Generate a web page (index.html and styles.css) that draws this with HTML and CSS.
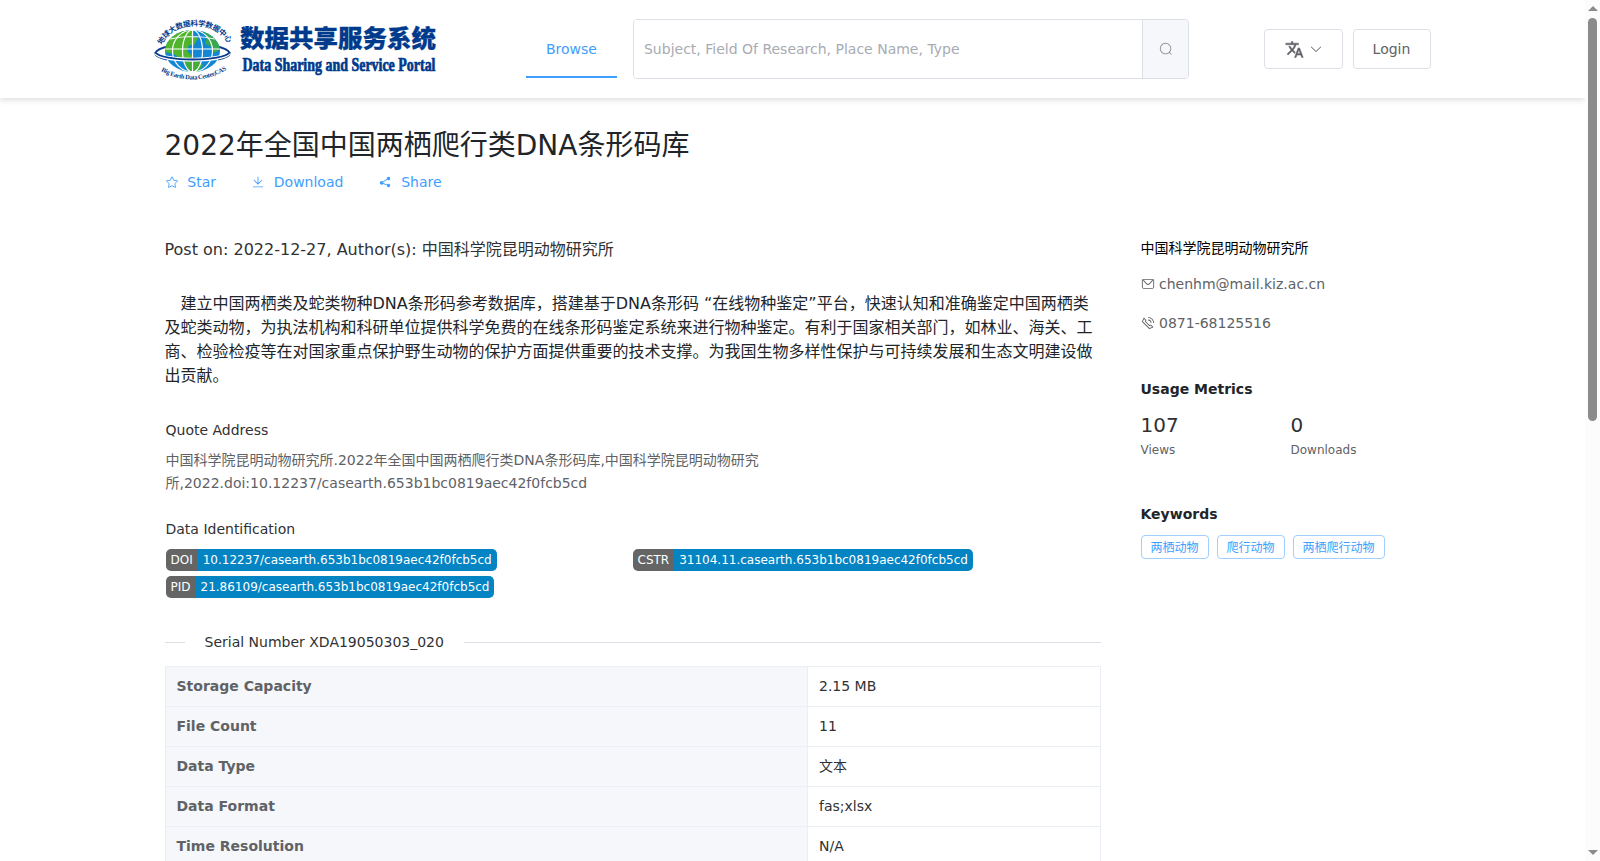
FILE: index.html
```html
<!DOCTYPE html>
<html lang="zh-CN">
<head>
  <meta charset="UTF-8" />
  <meta name="viewport" content="width=device-width, initial-scale=1.0"/>
  <title>2022年全国中国两栖爬行类DNA条形码库</title>
  <link rel="stylesheet" href="styles.css">
</head>
<body>
  <div class="page">
    <header class="header">
      <a class="logo" href="#">
        <svg width="300" height="90" viewBox="-5 -10 300 90">
          <defs>
            <path id="arcTop" d="M8 31 A35 28 0 0 1 74 30"/>
            <path id="arcBottom" d="M7 57 Q40 75 74 55"/>
            <clipPath id="globe"><ellipse cx="38.500" cy="37" rx="27.500" ry="21"/></clipPath>
          </defs>
          <path d="M15 32C-1 36 -4 42 13 45.500M62 32C78 36 81 42 64 45.500" fill="none" stroke="#0b3b8c" stroke-width="2"/>
          <ellipse cx="38.500" cy="37" rx="27.500" ry="21" fill="#1288d4"/>
          <g clip-path="url(#globe)">
            <path d="M10 30 21 18 30 15 40 16 38 22 44 24 40 31 35 31 33 37 40 44 37 48 26 45 20 40 11 38z" fill="#50b52c"/>
            <path d="M48 15 58 18 65 27 67 35 60 39 56 32 51 30 53 23z" fill="#38a94f"/>
            <path d="M30 47 43 46 49 51 43 59 35 58z" fill="#43ad38"/>
            <g fill="none" stroke="#fff" stroke-width="1.200">
              <path d="M38.500 16v42M10 35h57M16 25q22-5 45 0"/>
              <ellipse cx="38.500" cy="37" rx="10" ry="21"/>
              <ellipse cx="38.500" cy="37" rx="20" ry="21"/>
            </g>
          </g>
          <path d="M2 39C8 48 69 48 75 39" fill="none" stroke="#fff" stroke-width="4"/>
          <path d="M1 38C7 48 70 48 76 38" fill="none" stroke="#0b3b8c" stroke-width="1.800"/>
          <text class="logo-arc"><textPath href="#arcTop" textLength="79">地球大数据科学数据中心</textPath></text>
          <text class="logo-arc-en"><textPath href="#arcBottom" textLength="69">Big Earth Data Center,CAS</textPath></text>
          <text class="logo-cn" x="86" y="33" textLength="196" lengthAdjust="spacingAndGlyphs">数据共享服务系统</text>
          <text class="logo-en" x="88.500" y="56.500" textLength="193" lengthAdjust="spacingAndGlyphs">Data Sharing and Service Portal</text>
        </svg>
      </a>
      <nav class="nav"><a class="nav-item" href="#">Browse</a></nav>
      <form class="search">
        <input class="search-input" type="text" placeholder="Subject, Field Of Research, Place Name, Type">
        <button class="search-btn" type="button">
          <svg class="icon" viewBox="0 0 1024 1024"><path d="m795.904 750.720 124.992 124.928a32 32 0 0 1-45.248 45.248L750.656 795.904a416 416 0 1 1 45.248-45.248zM480 832a352 352 0 1 0 0-704 352 352 0 0 0 0 704"/></svg>
        </button>
      </form>
      <div class="header-actions">
        <button class="btn btn-lang" type="button">
          <svg class="icon-lang" viewBox="0 0 24 24"><path d="M12.870 15.070l-2.540-2.510.03-.03c1.740-1.940 2.980-4.170 3.710-6.530H17V4h-7V2H8v2H1v1.990h11.170C11.500 7.920 10.440 9.750 9 11.350 8.070 10.320 7.300 9.190 6.690 8h-2c.73 1.630 1.730 3.170 2.980 4.560l-5.090 5.020L4 19l5-5 3.110 3.110.76-2.040zM18.500 10h-2L12 22h2l1.120-3h4.750L21 22h2l-4.500-12zm-2.620 7l1.620-4.330L19.120 17h-3.240z"/></svg>
          <svg class="icon" viewBox="0 0 1024 1024"><path d="M831.872 340.864 512 652.672 192.128 340.864a30.592 30.592 0 0 0-42.752 0 29.120 29.120 0 0 0 0 41.600L489.664 714.240a32 32 0 0 0 44.672 0l340.288-331.712a29.120 29.120 0 0 0 0-41.728 30.592 30.592 0 0 0-42.752 0z"/></svg>
        </button>
        <button class="btn btn-login" type="button">Login</button>
      </div>
    </header>

    <main class="container">
      <h1 class="title">2022年全国中国两栖爬行类DNA条形码库</h1>
      <div class="links">
        <a class="link" href="#">
          <svg class="icon" viewBox="0 0 1024 1024"><path class="outline" d="m512 783 247 130a6 6 0 0 0 9-7l-47-274 199-194a6 6 0 0 0-4-11l-275-40L518 137a6 6 0 0 0-12 0L383 387l-275 40a6 6 0 0 0-4 11l199 194-47 274a6 6 0 0 0 10 7z"/></svg>
          <span>Star</span>
        </a>
        <a class="link" href="#">
          <svg class="icon" viewBox="0 0 1024 1024"><path d="M160 832h704a32 32 0 1 1 0 64H160a32 32 0 1 1 0-64m384-253.696 236.288-236.352 45.248 45.248L508.800 704 192 387.200l45.248-45.248L480 584.704V128h64z"/></svg>
          <span>Download</span>
        </a>
        <a class="link" href="#">
          <svg class="icon" viewBox="0 0 1024 1024"><path d="m679.872 348.800-301.760 188.608a127.808 127.808 0 0 1 5.120 52.160l279.936 104.960a128 128 0 1 1-22.464 59.904l-279.872-104.960a128 128 0 1 1-16.640-166.272l301.696-188.608a128 128 0 1 1 33.920 54.272z"/></svg>
          <span>Share</span>
        </a>
      </div>

      <div class="content">
        <section class="detail">
          <p class="post">Post on: 2022-12-27, Author(s): 中国科学院昆明动物研究所</p>
          <p class="description">建立中国两栖类及蛇类物种DNA条形码参考数据库，搭建基于DNA条形码 “在线物种鉴定”平台，快速认知和准确鉴定中国两栖类及蛇类动物，为执法机构和科研单位提供科学免费的在线条形码鉴定系统来进行物种鉴定。有利于国家相关部门，如林业、海关、工商、检验检疫等在对国家重点保护野生动物的保护方面提供重要的技术支撑。为我国生物多样性保护与可持续发展和生态文明建设做出贡献。</p>

          <h4 class="sub-title">Quote Address</h4>
          <p class="quote">中国科学院昆明动物研究所.2022年全国中国两栖爬行类DNA条形码库,中国科学院昆明动物研究所,2022.doi:10.12237/casearth.653b1bc0819aec42f0fcb5cd</p>

          <h4 class="sub-title">Data Identification</h4>
          <div class="badges">
            <div class="badge"><span class="badge-key">DOI</span><span class="badge-value">10.12237/casearth.653b1bc0819aec42f0fcb5cd</span></div>
            <div class="badge"><span class="badge-key">CSTR</span><span class="badge-value">31104.11.casearth.653b1bc0819aec42f0fcb5cd</span></div>
            <div class="badge"><span class="badge-key">PID</span><span class="badge-value">21.86109/casearth.653b1bc0819aec42f0fcb5cd</span></div>
          </div>

          <div class="divider">Serial Number XDA19050303_020</div>

          <table class="info">
            <tr><th>Storage Capacity</th><td>2.15 MB</td></tr>
            <tr><th>File Count</th><td>11</td></tr>
            <tr><th>Data Type</th><td>文本</td></tr>
            <tr><th>Data Format</th><td>fas;xlsx</td></tr>
            <tr><th>Time Resolution</th><td>N/A</td></tr>
          </table>
        </section>

        <aside class="side">
          <div class="org">中国科学院昆明动物研究所</div>
          <div class="contact">
            <svg class="icon" viewBox="0 0 1024 1024"><path d="M128 224v512a64 64 0 0 0 64 64h640a64 64 0 0 0 64-64V224zm0-64h768a64 64 0 0 1 64 64v512a128 128 0 0 1-128 128H192A128 128 0 0 1 64 736V224a64 64 0 0 1 64-64"/><path d="M904 224 656.512 506.880a192 192 0 0 1-289.024 0L120 224zm-698.944 0 210.560 240.704a128 128 0 0 0 192.704 0L818.944 224z"/></svg>
            <span>chenhm@mail.kiz.ac.cn</span>
          </div>
          <div class="contact">
            <svg class="icon" viewBox="0 0 1024 1024"><path d="M79.360 432.256 591.744 944.640a32 32 0 0 0 35.200 6.784l253.440-108.544a32 32 0 0 0 9.984-52.032l-153.856-153.920a32 32 0 0 0-36.928-6.016l-69.888 34.944L358.080 394.240l35.008-69.888a32 32 0 0 0-5.952-36.928L233.152 133.568a32 32 0 0 0-52.032 10.048L72.512 397.056a32 32 0 0 0 6.784 35.200zm60.480-29.952 81.536-190.080L325.568 316.480l-24.640 49.216-20.608 41.216 32.576 32.640 271.552 271.552 32.640 32.640 41.216-20.672 49.280-24.576 104.192 104.128-190.080 81.472zM512 320v-64a256 256 0 0 1 256 256h-64a192 192 0 0 0-192-192m0-192V64a448 448 0 0 1 448 448h-64a384 384 0 0 0-384-384"/></svg>
            <span>0871-68125516</span>
          </div>

          <h4 class="side-title">Usage Metrics</h4>
          <div class="metrics">
            <div class="metric"><b>107</b><span>Views</span></div>
            <div class="metric"><b>0</b><span>Downloads</span></div>
          </div>

          <h4 class="side-title">Keywords</h4>
          <div class="tags">
            <span class="tag">两栖动物</span>
            <span class="tag">爬行动物</span>
            <span class="tag">两栖爬行动物</span>
          </div>
        </aside>
      </div>
    </main>
  </div>

  <div class="scrollbar">
    <i class="arrow-up"></i>
    <i class="thumb"></i>
    <i class="arrow-down"></i>
  </div>
</body>
</html>
```
FILE: styles.css
```css
* {
  box-sizing: border-box;
}
body {
  display: flex;
  height: 861px;
  margin: 0;
  overflow: hidden;
  background: #fff;
  color: #212529;
  font-family: "DejaVu Sans", "Noto Sans CJK SC", sans-serif;
  font-size: 14px;
}
h1, h4, p {
  margin: 0;
  font-weight: 400;
}
a {
  color: #409eff;
  text-decoration: none;
}
button, input {
  font-family: inherit;
  font-size: 14px;
}
.page {
  flex: 1;
  min-width: 0;
  overflow: hidden;
}
.icon {
  width: 14px;
  height: 14px;
  fill: currentColor;
  flex-shrink: 0;
}
.outline {
  fill: none;
  stroke: currentColor;
  stroke-width: 64;
}

/* header */
.header {
  display: flex;
  align-items: center;
  height: 98px;
  padding-left: 149px;
  box-shadow: 0 2px 6px rgba(0,0,0,0.14);
}
.logo {
  width: 300px;
  height: 90px;
}
.logo svg {
  display: block;
  overflow: visible;
}
.logo text {
  fill: #003a8c;
}
.logo-arc {
  font: 700 7.5px "Noto Sans CJK SC", sans-serif;
}
.logo-arc-en {
  font: 700 6.5px "Liberation Serif", serif;
}
.logo-cn {
  font: 900 24px "Noto Sans CJK SC", sans-serif;
  stroke: #003a8c;
  stroke-width: 0.3;
}
.logo-en {
  font: 700 18px "Liberation Serif", serif;
  stroke: #003a8c;
  stroke-width: 0.7;
}
.nav {
  margin-left: 77px;
}
.nav-item {
  display: block;
  height: 58px;
  padding: 0 20px;
  border-bottom: 2px solid #409eff;
  line-height: 58px;
}
.search {
  display: flex;
  width: 556px;
  height: 60px;
  margin-left: 16px;
  border: 1px solid #dcdfe6;
  border-radius: 4px;
  overflow: hidden;
}
.search-input {
  flex: 1;
  padding: 0 10px;
  border: 0;
  outline: 0;
}
.search-input::placeholder {
  color: #a8abb2;
}
.search-btn {
  display: flex;
  align-items: center;
  justify-content: center;
  width: 46px;
  padding: 0;
  border: 0;
  border-left: 1px solid #dcdfe6;
  background: #f5f7fa;
  color: #909399;
}
.search-btn .icon {
  margin-left: 1px;
}
.header-actions {
  display: flex;
  gap: 10px;
  margin-left: 75px;
}
.btn {
  display: flex;
  align-items: center;
  justify-content: center;
  height: 40px;
  padding: 0;
  border: 1px solid #dcdfe6;
  border-radius: 4px;
  background: #fff;
  color: #606266;
}
.btn-lang {
  width: 79px;
  gap: 5px;
  padding-left: 1px;
}
.icon-lang {
  width: 19px;
  height: 19px;
  fill: currentColor;
  stroke: currentColor;
  stroke-width: 0.6;
}
.btn-login {
  width: 78px;
  padding-right: 1px;
}

/* main */
.container {
  padding: 25px 0 0 164.5px;
}
.title {
  font-size: 28px;
  line-height: 46px;
}
.links {
  display: flex;
  gap: 35px;
  margin-top: 3px;
}
.link {
  display: flex;
  align-items: center;
  gap: 8.8px;
  height: 20px;
}
.content {
  display: flex;
  gap: 40px;
  margin-top: 45px;
}
.detail {
  width: 936px;
  padding-top: 1px;
}
.post {
  color: #303133;
  font-size: 16px;
  line-height: 24px;
}
.description {
  margin-top: 30px;
  font-size: 16px;
  line-height: 24px;
  text-indent: 1em;
}
.sub-title {
  margin-top: 32px;
  padding-left: 1px;
  color: #303133;
  line-height: 20px;
}
.quote {
  width: 610px;
  margin-top: 9px;
  padding-left: 1px;
  color: #606266;
  line-height: 23px;
}
.quote + .sub-title {
  margin-top: 24px;
}
.badges {
  display: grid;
  grid-template-columns: 467px auto;
  justify-items: start;
  row-gap: 5px;
  margin-top: 10px;
  padding-left: 1px;
}
.badge {
  display: flex;
  height: 22px;
  border-radius: 5px;
  overflow: hidden;
  color: #fff;
  font-size: 12px;
  line-height: 22px;
}
.badge-key {
  padding: 0 5px;
  background: #656565;
}
.badge-value {
  padding: 0 5px;
  background: #0484c3;
}
.divider {
  display: flex;
  align-items: center;
  gap: 20px;
  height: 20px;
  margin-top: 34px;
  color: #303133;
}
.divider::before,
.divider::after {
  content: "";
  width: 20px;
  height: 1px;
  background: #dcdfe6;
}
.divider::after {
  flex: 1;
}
.info {
  width: 936px;
  margin-top: 14px;
  border-collapse: collapse;
  table-layout: fixed;
}
.info th,
.info td {
  height: 40px;
  padding: 0 11px;
  border: 1px solid #ebeef5;
  line-height: 23px;
  text-align: left;
}
.info th {
  width: 642px;
  background: #f5f7fa;
  color: #606266;
}
.info td {
  padding-left: 11.5px;
  color: #303133;
}

/* sidebar */
.side {
  width: 300px;
}
.org {
  color: #000;
  line-height: 22px;
}
.contact {
  display: flex;
  align-items: center;
  gap: 4.5px;
  height: 23px;
  margin-top: 16px;
  color: #606266;
}
.org + .contact {
  margin-top: 13px;
}
.side-title {
  margin-top: 45px;
  font-weight: 700;
  line-height: 20px;
}
.metrics {
  display: flex;
}
.metric {
  display: flex;
  flex-direction: column;
  width: 150px;
  padding-top: 12px;
}
.metric b {
  color: #303133;
  font-size: 20px;
  font-weight: 400;
  line-height: 28px;
}
.metric span {
  margin-top: 2px;
  color: #606266;
  font-size: 12px;
  line-height: 18px;
}
.tags {
  display: flex;
  gap: 8px;
  margin-top: 11px;
}
.tag {
  height: 24px;
  padding: 1px 9px 0;
  border: 1px solid #a0cfff;
  border-radius: 4px;
  color: #409eff;
  font-size: 12px;
  line-height: 22px;
}

/* scroll track */
.scrollbar {
  display: flex;
  flex-direction: column;
  align-items: center;
  width: 15px;
  padding: 6px 0;
  background: #fcfcfc;
}
.arrow-up,
.arrow-down {
  border: 5px solid transparent;
}
.arrow-up {
  border-top: 0;
  border-bottom-color: #8b8b8b;
}
.thumb {
  width: 9px;
  height: 403px;
  margin: 7px 0 auto;
  border-radius: 5px;
  background: #8b8b8b;
}
.arrow-down {
  border-bottom: 0;
  border-top-color: #8b8b8b;
}
```
